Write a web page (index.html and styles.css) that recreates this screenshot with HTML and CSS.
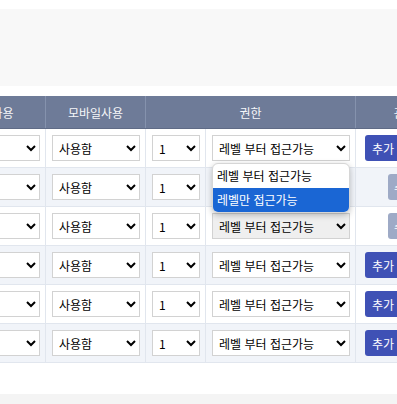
FILE: index.html
```html
<!DOCTYPE html>
<html lang="ko">
<head>
  <meta charset="utf-8" />
  <title>권한 설정</title>
  <link rel="stylesheet" href="styles.css">
</head>
<body>
  <div class="search-box"></div>

  <div class="table-wrap">
    <table class="grid">
      <colgroup>
        <col class="c-pc" />
        <col class="c-mobile" />
        <col class="c-level" />
        <col class="c-auth" />
        <col class="c-act" />
      </colgroup>
      <thead>
        <tr>
          <th>PC사용</th>
          <th>모바일사용</th>
          <th colspan="2">권한</th>
          <th>관리</th>
        </tr>
      </thead>
      <tbody>
        <tr>
          <td><select><option>사용함</option></select></td>
          <td><select><option>사용함</option><option>사용안함</option></select></td>
          <td><select><option>1</option></select></td>
          <td>
            <span class="select-wrap">
              <select><option>레벨 부터 접근가능</option><option>레벨만 접근가능</option></select>
              <ul class="dropdown">
                <li>레벨 부터 접근가능</li>
                <li class="on">레벨만 접근가능</li>
              </ul>
            </span>
          </td>
          <td><div class="btns"><button class="btn add">추가</button><button class="btn del">삭제</button></div></td>
        </tr>
        <tr>
          <td><select><option>사용함</option></select></td>
          <td><select><option>사용함</option><option>사용안함</option></select></td>
          <td><select><option>1</option></select></td>
          <td><select><option>레벨 부터 접근가능</option><option>레벨만 접근가능</option></select></td>
          <td><div class="btns"><button class="btn off" disabled>수정</button></div></td>
        </tr>
        <tr>
          <td><select><option>사용함</option></select></td>
          <td><select><option>사용함</option><option>사용안함</option></select></td>
          <td><select><option>1</option></select></td>
          <td><select class="locked"><option>레벨 부터 접근가능</option><option>레벨만 접근가능</option></select></td>
          <td><div class="btns"><button class="btn off" disabled>수정</button></div></td>
        </tr>
        <tr>
          <td><select><option>사용함</option></select></td>
          <td><select><option>사용함</option><option>사용안함</option></select></td>
          <td><select><option>1</option></select></td>
          <td><select><option>레벨 부터 접근가능</option><option>레벨만 접근가능</option></select></td>
          <td><div class="btns"><button class="btn add">추가</button><button class="btn del">삭제</button></div></td>
        </tr>
        <tr>
          <td><select><option>사용함</option></select></td>
          <td><select><option>사용함</option><option>사용안함</option></select></td>
          <td><select><option>1</option></select></td>
          <td><select><option>레벨 부터 접근가능</option><option>레벨만 접근가능</option></select></td>
          <td><div class="btns"><button class="btn add">추가</button><button class="btn del">삭제</button></div></td>
        </tr>
        <tr>
          <td><select><option>사용함</option></select></td>
          <td><select><option>사용함</option><option>사용안함</option></select></td>
          <td><select><option>1</option></select></td>
          <td><select><option>레벨 부터 접근가능</option><option>레벨만 접근가능</option></select></td>
          <td><div class="btns"><button class="btn add">추가</button><button class="btn del">삭제</button></div></td>
        </tr>
      </tbody>
    </table>
  </div>

  <div class="footer-box"></div>
</body>
</html>
```

FILE: styles.css
```css
html, body { margin: 0; padding: 0; font-family: "Noto Sans CJK KR", "Noto Sans", sans-serif; font-size: 12px; color: #111; background: #fff; overflow: hidden; }
.search-box { height: 77px; margin-top: 9px; background: #f8f8f8; }
.table-wrap { margin-top: 10px; overflow: hidden; }
.grid { border-collapse: collapse; table-layout: fixed; width: 509px; margin-left: -56px; }
.c-pc { width: 101px; }
.c-mobile { width: 100px; }
.c-level { width: 60px; }
.c-auth { width: 150px; }
.c-act { width: 98px; }
.grid th { height: 32px; padding: 0; background: #6e7b98; color: #f6f7fa; font-weight: normal; font-size: 12px; border-left: 1px solid #8592ad; border-bottom: 1px solid #5f6b86; white-space: nowrap; }
.grid td { height: 38px; padding: 0 5px 0 6px; border: 1px solid #e1e6ee; border-top: 0; vertical-align: middle; }
.grid tbody tr:nth-child(even) td { background: #f1f4f9; }
select { width: 100%; height: 26px; font-family: inherit; font-size: 12px; color: #000; background: #fff; border: 1px solid #d2d2d2; border-radius: 0; padding: 0 2px; display: block; }
select.locked { background: #efefef; }
.select-wrap { position: relative; display: block; }
.dropdown { position: absolute; top: 28px; left: 0; right: 0; margin: 0; padding: 0; list-style: none; background: #fff; border: 1px solid #d6d6d6; border-radius: 6px; box-shadow: 0 2px 6px rgba(0,0,0,.25); overflow: hidden; z-index: 5; }
.dropdown li { height: 24px; line-height: 24px; padding: 0 4px; font-size: 12px; color: #000; white-space: nowrap; }
.dropdown li.on { background: #1a66d4; color: #fff; }
.btns { display: flex; justify-content: center; gap: 4px; }
.btn { height: 26px; padding: 0 7px; border: 0; border-radius: 3px; font-family: inherit; font-size: 12px; color: #fff; white-space: nowrap; text-align: left; }
.btn.add { width: 38px; background: #3f51b5; }
.btn.del { width: 38px; background: #e05050; }
.btn.off { width: 34px; padding: 0 6px; background: #9eaac6; }
.footer-box { height: 40px; margin-top: 31px; background: #f4f4f4; }
```
